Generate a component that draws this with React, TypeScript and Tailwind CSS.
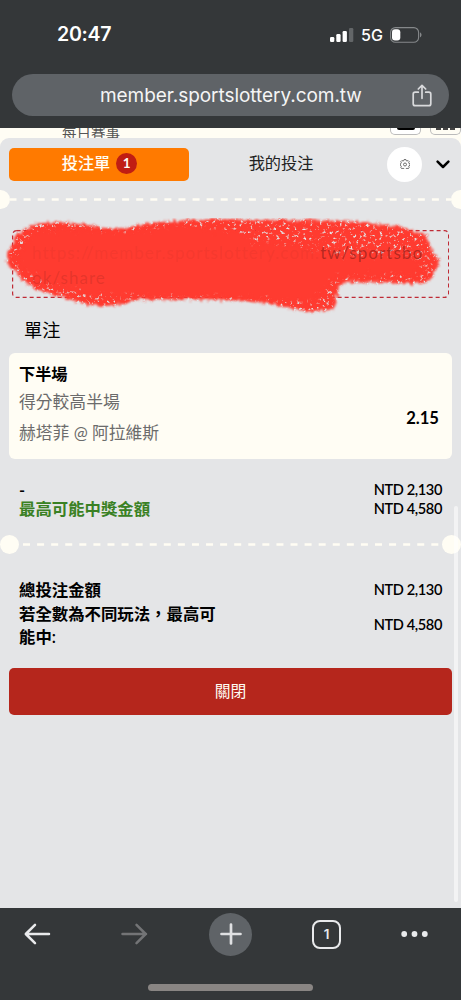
import type { ReactNode } from "react"

function StatusBar() {
  return (
    <div className="flex h-[68px] items-center justify-between pl-[57px] pr-[38px] text-white">
      <span className="mt-px text-[19.6px] leading-none font-semibold font-[Inter,sans-serif] tracking-[-0.3px]">20:47</span>
      <div className="mt-px flex items-center">
        <svg width="24" height="16" viewBox="0 0 24 16" fill="#fff">
          <rect x="0" y="10" width="4.3" height="5" rx="1.2" />
          <rect x="6.3" y="7" width="4.3" height="8" rx="1.2" />
          <rect x="12.6" y="4" width="4.3" height="11" rx="1.2" />
          <rect x="19" y="1" width="4.3" height="14" rx="1.2" fill="#636668" />
        </svg>
        <span className="ml-[7px] w-[22px] text-[16px] leading-none font-medium font-[Inter,sans-serif]">5G</span>
        <svg className="ml-[7px]" width="33" height="16" viewBox="0 0 33 16">
          <rect x="0.6" y="0.6" width="28" height="14.6" rx="4.8" fill="none" stroke="#85888a" strokeWidth="1.1" />
          <rect x="2" y="2.2" width="8.3" height="11.4" rx="3" fill="#fff" />
          <path d="M30 5.5c2 .7 2 4 0 4.8z" fill="#85888a" />
        </svg>
      </div>
    </div>
  )
}

function AddressBar() {
  return (
    <div className="mx-3 mt-1.5 flex h-[42px] items-center rounded-full bg-[#5f6367] pl-[88px] pr-[17px]">
      <span className="flex-1 whitespace-nowrap text-[19px] leading-none tracking-[-0.05px] text-[#f5f5f5] font-[Inter,sans-serif]">
        member.sportslottery.com.tw
      </span>
      <svg width="20" height="23" viewBox="0 0 20 23" fill="none" stroke="#d9dadc" strokeWidth="1.7" strokeLinecap="round" strokeLinejoin="round">
        <path d="M6.3 8.2H3.2A2 2 0 0 0 1.2 10.2V19.7A2 2 0 0 0 3.2 21.7H16.8A2 2 0 0 0 18.8 19.7V10.2A2 2 0 0 0 16.8 8.2H13.7" />
        <path d="M10 14.3V1.3M6.3 5 10 1.3 13.7 5" />
      </svg>
    </div>
  )
}

// Ticket style separator: dashed line with a punched hole on both ends
function TicketDivider({ edge }: { edge?: boolean }) {
  return (
    <div className={edge ? "-mx-[9px] flex h-[19px] items-center" : "flex h-[19px] items-center"}>
      <div className="size-[19px] shrink-0 rounded-full bg-[#fffdf4]" />
      <svg className="h-[3px] min-w-0 flex-1" fill="none">
        <line x1={edge ? -0.5 : 4} y1="1.5" x2="100%" y2="1.5" stroke="#fffdf4" strokeWidth="2.4" strokeDasharray="7 7.08" />
      </svg>
      <div className="size-[19px] shrink-0 rounded-full bg-[#fffdf4]" />
    </div>
  )
}

function Tabs() {
  return (
    <div className="flex h-[52px] items-center pl-[9px]">
      <button className="flex h-[33px] w-[180px] items-center justify-center gap-[6px] rounded-[5px] bg-[#ff7a00] pb-px pl-px text-[16.2px] font-medium text-[#fffdf4]">
        投注單
        <span className="flex size-[21px] items-center justify-center rounded-full bg-[#c01d13] text-[13.5px] font-bold">1</span>
      </button>
      <button className="w-[184px] pb-px text-center text-[16.2px] text-[#222]">我的投注</button>
      <button className="ml-[14px] flex size-[35px] shrink-0 items-center justify-center rounded-full bg-white">
        <svg width="10" height="10" viewBox="0 0 20 20" fill="none" stroke="#444" strokeWidth="1.5">
          <path d="M8.3 1h3.4l.6 2.3 1.8.8 2-1.2 2.4 2.4-1.2 2 .8 1.8 2.1.5v3.2l-2.1.6-.8 1.8 1.2 2-2.4 2.3-2-1.1-1.8.7-.6 2.1H8.3l-.6-2.1-1.8-.7-2 1.1-2.4-2.3 1.2-2-.8-1.8-1.3-.6V9.6l1.3-.5.8-1.8-1.2-2 2.4-2.4 2 1.2 1.8-.8z" />
          <circle cx="10" cy="11" r="3" />
        </svg>
      </button>
      <svg className="ml-[14px]" width="14" height="9" viewBox="0 0 14 9" fill="none" stroke="#000" strokeWidth="2.5" strokeLinecap="round" strokeLinejoin="round">
        <path d="M1.6 1.6 7 7 12.4 1.6" />
      </svg>
    </div>
  )
}

const scribble =
  "M7 38 9 31 14 25 13 19 24 12 40 5 65 4 90 7 115 12 150 5 190 2 231 1 300 2 350 3 380 6 405 10 425 16 430 26 434 36 439 41 436 53 430 63 415 66 400 65 345 64 338 69 335 90 325 92 310 94 290 90 265 85 231 82 190 81 135 82 125 86 105 88 85 86 65 80 35 71 22 63 16 53 8 48Z"

const core =
  "M22 26 38 12 60 10 115 14 160 9 190 7 240 14 255 24 285 24 325 33 345 38 405 36 425 45 418 57 345 59 328 66 318 84 270 82 220 79 135 79 100 78 60 70 26 56 16 40Z"

function ShareLink() {
  return (
    <div className="relative mx-3 mt-[21px] h-[68px] rounded-[4px] pl-5 pt-[10px] text-[17px] leading-[25px] tracking-[1.05px]">
      <svg className="absolute inset-0 size-full" fill="none">
        <rect x="0.6" y="0.6" width="436" height="66.8" rx="4" stroke="#bf2b36" strokeWidth="1.2" strokeDasharray="4 3" />
      </svg>
      {/* marker strokes over the link */}
      <svg className="absolute -left-3 -top-3" width="461" height="100" viewBox="0 0 461 100" fill="#ff3b30">
        <defs>
          <filter id="marker" x="-2%" y="-10%" width="104%" height="120%" colorInterpolationFilters="sRGB">
            <feTurbulence type="fractalNoise" baseFrequency="0.3" numOctaves="3" seed="7" result="noise" />
            <feDisplacementMap in="SourceGraphic" in2="noise" scale="8" xChannelSelector="R" yChannelSelector="G" result="rough" />
            <feGaussianBlur in="rough" stdDeviation="0.8" result="soft" />
            <feColorMatrix in="noise" type="matrix" values="0 0 0 0 0  0 0 0 0 0  0 0 0 0 0  0 0 0 -5 3.95" result="grain" />
            <feComposite in="soft" in2="grain" operator="in" />
          </filter>
          <filter id="core" x="-2%" y="-10%" width="104%" height="120%" colorInterpolationFilters="sRGB">
            <feTurbulence type="fractalNoise" baseFrequency="0.2" numOctaves="3" seed="3" result="noise" />
            <feDisplacementMap in="SourceGraphic" in2="noise" scale="18" xChannelSelector="R" yChannelSelector="G" result="rough" />
            <feGaussianBlur in="rough" stdDeviation="0.8" />
          </filter>
        </defs>
        <path d={scribble} filter="url(#marker)" />
        <path d={core} filter="url(#core)" />
      </svg>
      <p className="relative whitespace-nowrap text-[#b92b24]/15">
        https://member.sportslottery.com.<span className="text-[#5c120e]/45">tw/sportsbo</span>
      </p>
      <p className="relative text-[#7c1c16]/20">ok/share</p>
    </div>
  )
}

function Row({ label, children }: { label: ReactNode; children: ReactNode }) {
  return (
    <div className="flex items-center justify-between">
      <span className="w-[200px]">{label}</span>
      <span className="text-[14.6px] tracking-[-0.4px]">{children}</span>
    </div>
  )
}

function BetSlip() {
  return (
    <div className="flex flex-1 flex-col rounded-t-[9px] bg-[#e4e5e7] text-black">
      <Tabs />
      <TicketDivider edge />
      <ShareLink />
      <h2 className="ml-6 mt-[19px] text-[18.2px] leading-[26px]">單注</h2>

      <div className="mx-[9px] mt-[10px] flex h-[106px] items-center justify-between rounded-[6px] bg-[#fffdf4] pl-[10px] pr-[13px]">
        <div className="h-full">
          <p className="mt-[9px] text-[16.2px] leading-[24px] font-semibold">下半場</p>
          <p className="mt-[4px] text-[16.8px] leading-6 text-[#6b6b6b]">得分較高半場</p>
          <p className="mt-[7px] text-[16.8px] leading-6 text-[#6b6b6b]">赫塔菲 @ 阿拉維斯</p>
        </div>
        <span className="mt-[25px] text-[16.6px] font-bold">2.15</span>
      </div>

      <div className="mt-[21px] pl-[19px] pr-[19px] text-[16.4px] leading-[19px] font-semibold">
        <Row label="-">NTD 2,130</Row>
        <Row label={<span className="text-[#3a8124]">最高可能中獎金額</span>}>NTD 4,580</Row>
      </div>

      <div className="mt-[17px]">
        <TicketDivider />
      </div>

      <div className="mt-[24px] pl-[19px] pr-[19px] text-[16.4px] leading-[23.6px] font-semibold">
        <Row label="總投注金額">NTD 2,130</Row>
        <Row label="若全數為不同玩法，最高可能中:">NTD 4,580</Row>
      </div>

      <button className="mx-[9px] mt-[19px] h-[47px] rounded-[5px] bg-[#b5261c] text-[15.8px] text-[#fffdf4]">關閉</button>
    </div>
  )
}

function BottomBar() {
  return (
    <div className="h-[92px] shrink-0 bg-[#343739]">
      <div className="flex h-[52px] items-center pl-[24px] text-[#e9eaec]">
        <svg width="27" height="22" viewBox="0 0 27 22" fill="none" stroke="currentColor" strokeWidth="2.5" strokeLinecap="round" strokeLinejoin="round">
          <path d="M25 11H2M11 1.8 1.8 11 11 20.2" />
        </svg>
        <svg className="ml-[70px] text-[#737476]" width="27" height="22" viewBox="0 0 27 22" fill="none" stroke="currentColor" strokeWidth="2.5" strokeLinecap="round" strokeLinejoin="round">
          <path d="M1.5 11H25M15.5 1.8 24.7 11 15.5 20.2" />
        </svg>
        <div className="ml-[61px] flex size-[43px] items-center justify-center rounded-full bg-[#5f6367]">
          <svg width="22" height="22" viewBox="0 0 22 22" stroke="#dfe0e2" strokeWidth="2.7" strokeLinecap="round">
            <path d="M11 1.5V20.5M1.5 11H20.5" />
          </svg>
        </div>
        <div className="ml-[60px] flex size-[29px] items-center justify-center rounded-[8px] border-[2.5px] border-[#e9eaec] text-[13.5px] font-semibold font-[Inter,sans-serif]">
          1
        </div>
        <svg className="ml-[60px]" width="27" height="6" viewBox="0 0 27 6" fill="currentColor">
          <circle cx="3.2" cy="3" r="2.9" />
          <circle cx="13.5" cy="3" r="2.9" />
          <circle cx="23.8" cy="3" r="2.9" />
        </svg>
      </div>
      <div className="mx-auto mt-[24px] h-[7px] w-[165px] rounded-full bg-[#898583]" />
    </div>
  )
}

export default function App() {
  return (
    <div lang="zh-Hant-TW" className="flex h-[1000px] w-[461px] flex-col overflow-hidden bg-[#343739] font-[Lato,'Noto_Sans_CJK_TC',sans-serif]">
      <header className="h-32 shrink-0">
        <StatusBar />
        <AddressBar />
      </header>
      <main className="relative flex flex-1 flex-col overflow-hidden bg-[#fffdf4]">
        <div className="flex h-[10px] shrink-0 justify-between overflow-hidden pl-[62px]">
          <span className="-mt-[4px] text-[14.5px] leading-[20px] text-[#555]">每日賽事</span>
          <div className="flex gap-[9px]">
            <div className="flex h-[7px] w-[31px] justify-center rounded-b-[5px] border border-t-0 border-[#bbb] bg-white">
              <div className="h-[2px] w-[18px] rounded-b-full bg-black" />
            </div>
            <div className="flex h-[7px] w-[31px] justify-center gap-[2px] rounded-b-[5px] border border-t-0 border-[#bbb] bg-[#fffdf4]">
              <div className="h-[2px] w-[5px] bg-[#444]" />
              <div className="h-[2px] w-[5px] bg-[#444]" />
              <div className="h-[2px] w-[5px] bg-[#444]" />
            </div>
          </div>
        </div>
        <BetSlip />
        {/* scroll indicator */}
        <div className="absolute right-[3px] top-[378px] h-[396px] w-[4px] rounded-full bg-white/55" />
      </main>
      <BottomBar />
    </div>
  )
}
